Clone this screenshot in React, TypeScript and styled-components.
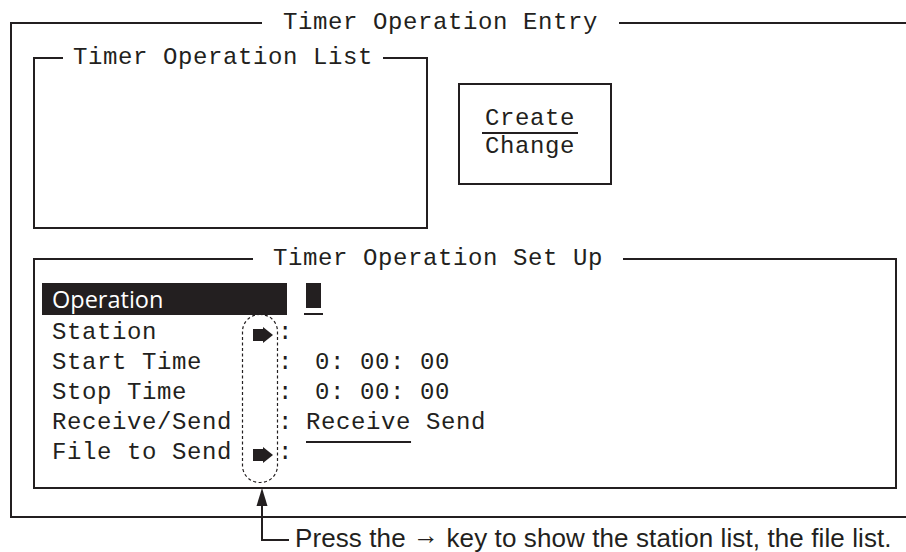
import React from 'react';
import styled, { createGlobalStyle } from 'styled-components';

const ink = '#231f20';

const GlobalStyle = createGlobalStyle`
  html, body {
    margin: 0;
    padding: 0;
    background: #fff;
  }
  body {
    overflow: hidden;
  }
`;

const Page = styled.div`
  position: relative;
  width: 906px;
  height: 552px;
  overflow: hidden;
  box-sizing: border-box;
  padding: 22px 0 0 10px;
  font-family: 'Liberation Mono', 'DejaVu Sans Mono', monospace;
  font-size: 24px;
  letter-spacing: 0.6px;
  color: ${ink};
`;

const Frame = styled.div<{ $w: number; $h: number; $pad?: string }>`
  position: relative;
  box-sizing: border-box;
  width: ${p => p.$w}px;
  height: ${p => p.$h}px;
  border: 2px solid ${ink};
  padding: ${p => p.$pad || '0'};
`;

const OuterFrame = styled(Frame)`
  display: flex;
  flex-direction: column;
`;

const FrameTitle = styled.span<{ $left: number; $pad: number }>`
  position: absolute;
  top: -13px;
  left: ${p => p.$left}px;
  padding: 0 ${p => p.$pad}px;
  background: #fff;
  line-height: 24px;
  white-space: nowrap;
`;

const TopRow = styled.div`
  display: flex;
  align-items: flex-start;
  gap: 30px;
`;

const Menu = styled(Frame)`
  margin-top: 26px;
  display: flex;
  flex-direction: column;
  justify-content: center;
  align-items: flex-start;
  padding-left: 22px;
`;

const MenuItem = styled.span<{ $selected?: boolean }>`
  display: inline-block;
  line-height: 26px;
  padding: 0 3px;
  border-bottom: 2px solid ${p => (p.$selected ? ink : 'transparent')};
  white-space: nowrap;
`;

const SetupFrame = styled(Frame)`
  margin-top: 29px;
`;

const Row = styled.div<{ $active?: boolean }>`
  display: flex;
  align-items: center;
  height: ${p => (p.$active ? 32 : 30)}px;
  margin-bottom: ${p => (p.$active ? 2 : 0)}px;
`;

const LabelCell = styled.div<{ $active?: boolean }>`
  display: grid;
  grid-template-columns: 205px 31px 9px;
  align-items: center;
  height: 100%;
  background: ${p => (p.$active ? ink : 'transparent')};
  color: ${p => (p.$active ? '#fff' : ink)};
`;

const LabelText = styled.span<{ $active?: boolean }>`
  padding-left: 10px;
  white-space: nowrap;
  font-family: ${p => (p.$active ? "'Open Sans', 'Liberation Sans', sans-serif" : 'inherit')};
  font-size: ${p => (p.$active ? '23.5px' : 'inherit')};
  letter-spacing: ${p => (p.$active ? '0' : 'inherit')};
`;

const ArrowSlot = styled.span`
  display: flex;
  align-items: center;
  padding-left: 6px;
  svg {
    margin-top: 6px;
  }
`;

const Colon = styled.span`
  white-space: nowrap;
`;

const Value = styled.div`
  margin-left: 19px;
  display: flex;
  align-items: center;
  height: 100%;
  white-space: pre;
`;

const TimeText = styled.span`
  padding-left: 9px;
`;

const Option = styled.span<{ $selected?: boolean }>`
  text-decoration: ${p => (p.$selected ? 'underline' : 'none')};
  text-decoration-thickness: 2px;
  text-underline-offset: 12px;
`;

const Cursor = styled.span`
  display: flex;
  flex-direction: column;
  align-items: center;
  gap: 5px;
  margin-left: -2px;
  &::before {
    content: '';
    width: 15px;
    height: 25px;
    background: ${ink};
  }
  &::after {
    content: '';
    width: 19px;
    height: 2px;
    background: ${ink};
  }
`;

const DashedOval = styled.svg`
  position: absolute;
  left: 207px;
  top: 54px;
  overflow: visible;
`;

const Pointer = styled.svg`
  position: absolute;
  left: 0;
  top: 0;
  pointer-events: none;
`;

const Caption = styled.div`
  margin: 8px 0 0 285px;
  font-family: 'Liberation Sans', Arial, sans-serif;
  font-size: 26px;
  line-height: 24px;
  letter-spacing: 0.1px;
  white-space: nowrap;
  color: ${ink};
`;

const KeyGlyph = styled.span`
  position: relative;
  top: -3px;
`;

function KeyArrow() {
  return (
    <svg width="20" height="16" viewBox="0 0 20 16">
      <rect x="0" y="2" width="11" height="12" fill={ink} />
      <polygon points="10,0 20,8 10,16" fill={ink} />
    </svg>
  );
}

type Field = { label: string; arrow?: boolean; value?: React.ReactNode };

const fields: Field[] = [
  { label: 'Station', arrow: true },
  { label: 'Start Time', value: <TimeText>0: 00: 00</TimeText> },
  { label: 'Stop Time', value: <TimeText>0: 00: 00</TimeText> },
  {
    label: 'Receive/Send',
    value: (
      <span>
        <Option $selected>Receive</Option> <Option>Send</Option>
      </span>
    ),
  },
  { label: 'File to Send', arrow: true },
];

export default function App() {
  return (
    <>
      <GlobalStyle />
      <Page>
        <OuterFrame $w={920} $h={496} $pad="33px 0 0 21px">
          <FrameTitle $left={250} $pad={21}>Timer Operation Entry</FrameTitle>
          <TopRow>
            <Frame $w={395} $h={172}>
              <FrameTitle $left={28} $pad={10}>Timer Operation List</FrameTitle>
            </Frame>
            <Menu $w={154} $h={102}>
              <MenuItem $selected>Create</MenuItem>
              <MenuItem>Change</MenuItem>
            </Menu>
          </TopRow>
          <SetupFrame $w={864} $h={231} $pad="23px 0 0 7px">
            <FrameTitle $left={218} $pad={20}>Timer Operation Set Up</FrameTitle>
            <Row $active>
              <LabelCell $active>
                <LabelText $active>Operation</LabelText>
              </LabelCell>
              <Value>
                <Cursor />
              </Value>
            </Row>
            {fields.map(f => (
              <Row key={f.label}>
                <LabelCell>
                  <LabelText>{f.label}</LabelText>
                  <ArrowSlot>{f.arrow && <KeyArrow />}</ArrowSlot>
                  <Colon>:</Colon>
                </LabelCell>
                <Value>{f.value}</Value>
              </Row>
            ))}
            <DashedOval width="36" height="169">
              <rect
                x="0.5"
                y="0.5"
                width="35"
                height="168"
                rx="17"
                ry="17"
                fill="none"
                stroke={ink}
                strokeWidth="1.2"
                strokeDasharray="3 2.5"
              />
            </DashedOval>
          </SetupFrame>
        </OuterFrame>
        <Caption>
          Press the <KeyGlyph>→</KeyGlyph> key to show the station list, the file list.
        </Caption>
        <Pointer width="906" height="552">
          <polygon points="262,488 256.5,506 267.5,506" fill={ink} />
          <polyline points="262,504 262,540 289,540" fill="none" stroke={ink} strokeWidth="2" />
        </Pointer>
      </Page>
    </>
  );
}
